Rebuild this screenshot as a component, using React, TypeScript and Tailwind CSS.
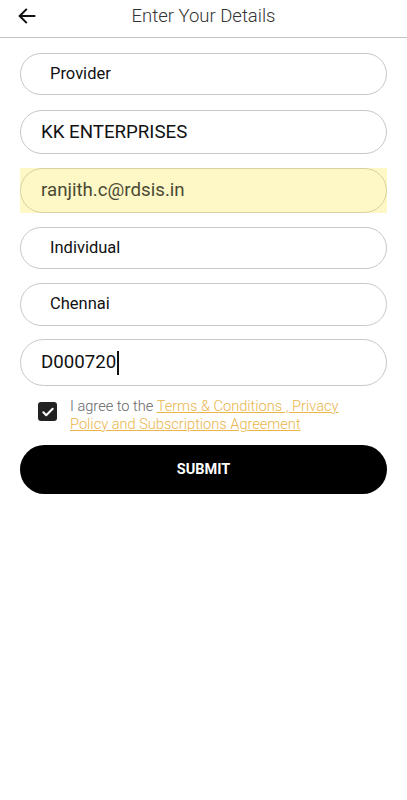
import React from "react";

const font = { fontFamily: "Roboto, 'Noto Sans', Arial, sans-serif" };

export default function App() {
  return (
    <div className="w-[407px] h-[800px] bg-white" style={font}>
      <div className="relative h-[38px] border-b border-[#c4c4c4] flex items-center justify-center">
        <svg className="absolute left-[16px] top-[5px]" width="22" height="22" viewBox="0 0 24 24" fill="none" stroke="#111" strokeWidth="2.2" strokeLinecap="square">
          <path d="M20 12H4.5" />
          <path d="M11 5l-7 7 7 7" strokeLinejoin="miter" />
        </svg>
        <span className="text-[18.5px] font-light text-[#333] leading-none mt-[-5px]">Enter Your Details</span>
      </div>
      <div className="px-5 pt-[15px] flex flex-col">
        <div className="h-[42px] rounded-full border border-[#c8c8c8] flex items-center pl-[29px] text-[16.5px] text-[#111]">Provider</div>
        <div className="mt-[15px] h-[44px] rounded-full border border-[#c8c8c8] flex items-center pl-[20px] text-[18.7px] text-[#111]">KK ENTERPRISES</div>
        <div className="mt-[14px] bg-[#fdf8c6]">
          <div className="h-[45px] rounded-full border border-[#d8d2a0] flex items-center pl-[20px] text-[18.7px] text-[#4b4a34]">ranjith.c@rdsis.in</div>
        </div>
        <div className="mt-[14px] h-[42px] rounded-full border border-[#c8c8c8] flex items-center pl-[29px] text-[16.5px] text-[#111]">Individual</div>
        <div className="mt-[14px] h-[43px] rounded-full border border-[#c8c8c8] flex items-center pl-[29px] text-[16.5px] text-[#111]">Chennai</div>
        <div className="mt-[13px] h-[47px] rounded-full border border-[#c8c8c8] flex items-center pl-[20px] text-[18.7px] text-[#111]">
          <span>D000720</span>
          <span className="inline-block w-[2px] h-[24px] bg-[#111] ml-[1px]" />
        </div>
        <div className="mt-[11px] flex items-start">
          <div className="ml-[18px] mt-[5px] w-[19px] h-[19px] rounded-[3px] bg-[#222] flex items-center justify-center shrink-0">
            <svg width="14" height="14" viewBox="0 0 24 24" fill="none" stroke="#fff" strokeWidth="3.5" strokeLinecap="round" strokeLinejoin="round">
              <path d="M4 12.5l5 5L20 6.5" />
            </svg>
          </div>
          <div className="ml-[13px] text-[14.6px] leading-[18px] font-light text-[#666]">
            I agree to the{" "}
            <span className="text-[#eab54c] underline">Terms &amp; Conditions , Privacy</span>
            <br />
            <span className="text-[#eab54c] underline">Policy and Subscriptions Agreement</span>
          </div>
        </div>
        <button className="mt-[12px] h-[49px] rounded-full bg-black text-white text-[14.5px] font-bold flex items-center justify-center">SUBMIT</button>
      </div>
    </div>
  );
}
